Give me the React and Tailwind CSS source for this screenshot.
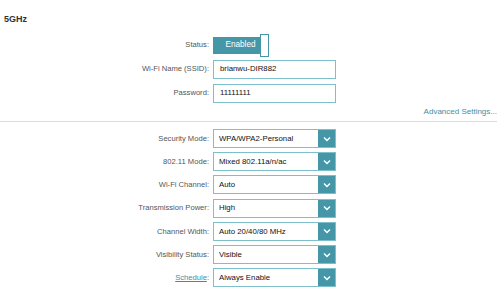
import React from 'react';

const Chevron = () => (
  <svg width="8" height="6" viewBox="0 0 8 6" fill="none">
    <polyline points="1,1.5 4,4.5 7,1.5" stroke="#ffffff" strokeWidth="1.4" />
  </svg>
);

const Row = ({ label, link, children, h = 'h-[24px]' }) => (
  <div className={`flex items-center ${h}`}>
    <div className="w-[209px] text-right text-[7.6px] text-[#555]">
      {link ? (
        <><span className="text-[#3d8fa5] underline">{label}</span>:</>
      ) : (
        <>{label}:</>
      )}
    </div>
    <div className="ml-[4px]">{children}</div>
  </div>
);

const TextBox = ({ value }) => (
  <div className="w-[123px] h-[19px] border border-[#7dbfcb] flex items-center pl-[6px] text-[7.8px] text-[#111]">
    {value}
  </div>
);

const Select = ({ value }) => (
  <div className="w-[123px] h-[19px] border border-[#7dbfcb] flex items-stretch">
    <div className="flex-1 flex items-center pl-[5px] text-[7.8px] text-[#111]">{value}</div>
    <div className="w-[17px] bg-[#4597a8] flex items-center justify-center">
      <Chevron />
    </div>
  </div>
);

export default function App() {
  const selects = [
    ['Security Mode', 'WPA/WPA2-Personal'],
    ['802.11 Mode', 'Mixed 802.11a/n/ac'],
    ['Wi-Fi Channel', 'Auto'],
    ['Transmission Power', 'High'],
    ['Channel Width', 'Auto 20/40/80 MHz'],
    ['Visibility Status', 'Visible'],
  ];

  return (
    <div className="w-[500px] h-[288px] bg-white overflow-hidden font-['Liberation_Sans',Arial,sans-serif]">
      <div className="pt-[13px] pl-[4px] h-[33px] text-[9px] font-bold text-[#333]">5GHz</div>

      <Row label="Status">
        <div className="flex items-center">
          <div className="w-[47px] h-[17px] bg-[#4597a8] text-white text-[8.2px] flex items-center justify-center pl-[8px]">
            Enabled
          </div>
          <div className="w-[9px] h-[23px] bg-white border border-[#4597a8]" />
        </div>
      </Row>
      <Row label="Wi-Fi Name (SSID)">
        <TextBox value="brianwu-DIR882" />
      </Row>
      <Row label="Password">
        <TextBox value="11111111" />
      </Row>

      <div className="flex justify-end pr-[3px] h-[14px] items-center text-[8px] text-[#3d8fa5]">
        Advanced Settings...
      </div>
      <div className="mt-[2px] mr-[3px] h-[1px] bg-[#dcdcdc]" />

      <div className="mt-[5px]">
        {selects.map(([l, v]) => (
          <Row key={l} label={l} h="h-[23.2px]">
            <Select value={v} />
          </Row>
        ))}
        <Row label="Schedule" link h="h-[23.2px]">
          <Select value="Always Enable" />
        </Row>
      </div>
    </div>
  );
}
